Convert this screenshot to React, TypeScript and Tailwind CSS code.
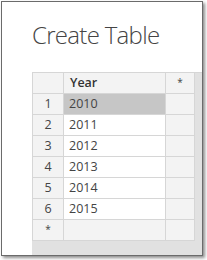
import React from 'react';

const rows = ['2010', '2011', '2012', '2013', '2014', '2015'];

export default function App() {
  return (
    <div className="w-[207px] h-[260px] bg-white pl-[1px] pt-[1px] overflow-hidden" style={{ fontFamily: '"Open Sans", "Noto Sans", sans-serif' }}>
      <div className="w-[202px] h-[255px] border border-[#6b6b6b] bg-white flex flex-col shadow-[2px_2px_3px_rgba(0,0,0,0.45)]">
        <h1 className="ml-[30px] mt-[17px] h-[53px] text-[24px] leading-[32px] font-light text-[#444] tracking-[-0.7px]">Create Table</h1>
        <div className="flex-1 ml-[30px] bg-[#e1e1e1] text-[12.5px] text-[#444]">
          <div className="flex h-[22px] border-t border-[#d6d6d6]">
            <div className="w-[32px] border-x border-b border-[#d6d6d6] bg-[#f3f3f3]" />
            <div className="w-[102px] border-r border-b border-[#d6d6d6] bg-[#f3f3f3] pl-[6px] leading-[20px] font-semibold text-[#333]">Year</div>
            <div className="w-[29px] border-r border-b border-[#d6d6d6] bg-[#f3f3f3] text-center leading-[18px] text-[10px]">*</div>
          </div>
          {rows.map((y, i) => (
            <div key={y} className="flex h-[21px]">
              <div className="w-[32px] border-x border-b border-[#d6d6d6] bg-[#f3f3f3] text-center leading-[20px]">{i + 1}</div>
              <div className={`w-[102px] border-r border-b border-[#d6d6d6] pl-[5px] leading-[20px] ${i === 0 ? 'bg-[#c6c6c6]' : 'bg-white'}`}>{y}</div>
              <div className="w-[29px] border-r border-b border-[#d6d6d6] bg-[#f3f3f3]" />
            </div>
          ))}
          <div className="flex h-[21px]">
            <div className="w-[32px] border-x border-b border-[#d6d6d6] bg-[#f3f3f3] text-center leading-[18px] text-[10px]">*</div>
            <div className="w-[102px] border-r border-b border-[#d6d6d6] bg-[#f3f3f3]" />
            <div className="w-[29px] border-r border-b border-[#d6d6d6] bg-[#f3f3f3]" />
          </div>
        </div>
      </div>
    </div>
  );
}
